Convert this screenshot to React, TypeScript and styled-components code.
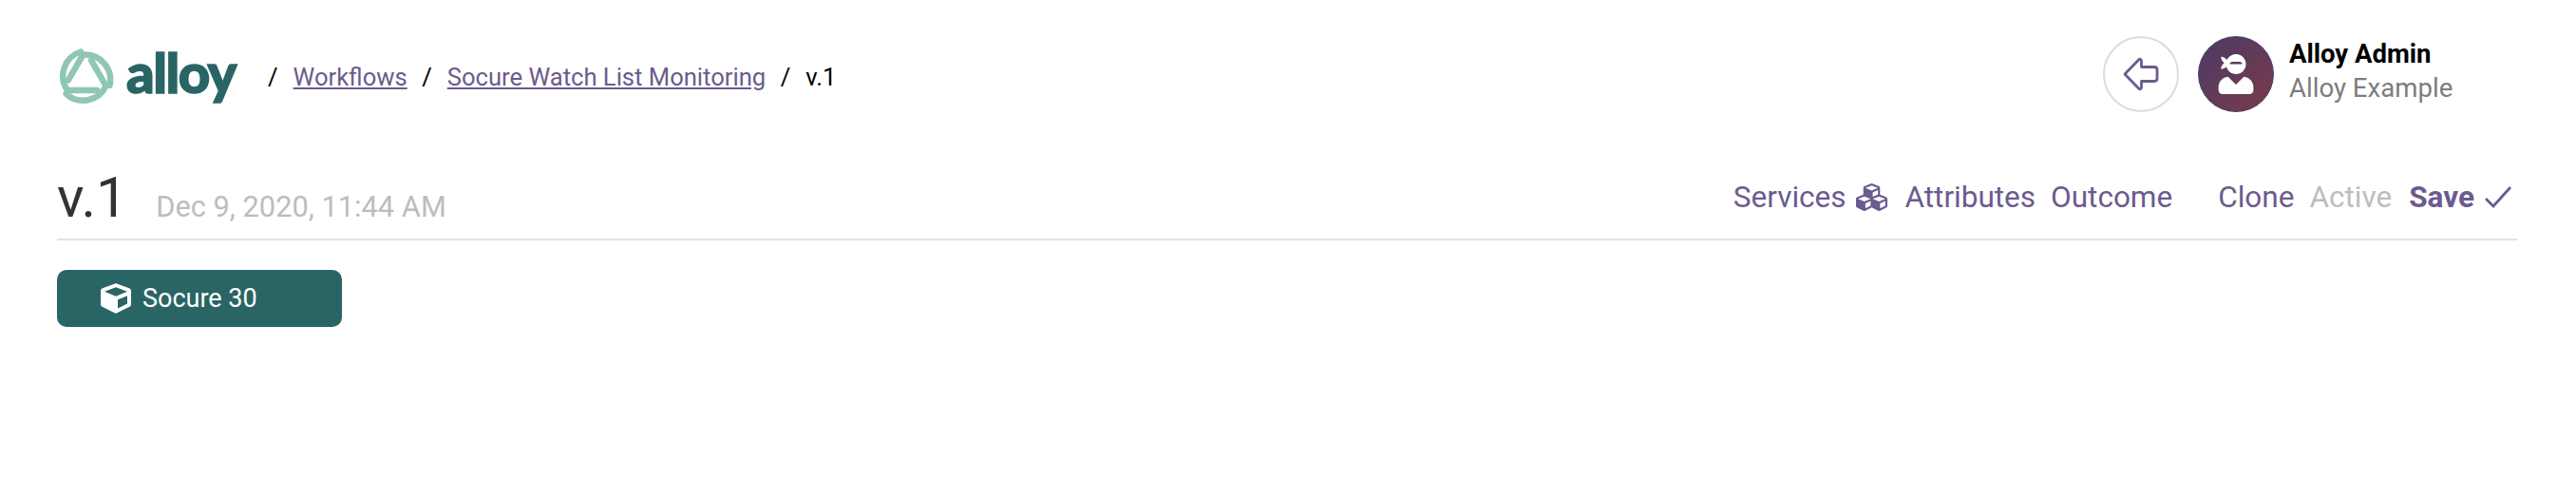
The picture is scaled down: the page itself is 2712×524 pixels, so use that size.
import React from 'react';
import styled, { createGlobalStyle } from 'styled-components';
import { FaCube, FaCubes, FaUserNinja } from 'react-icons/fa';

const GlobalStyle = createGlobalStyle`
  html, body {
    margin: 0;
    padding: 0;
    background: #fff;
    font-family: Roboto, "Liberation Sans", sans-serif;
  }
`;

const purple = '#6b5b8e';

const Page = styled.div`
  box-sizing: border-box;
  width: 2712px;
  height: 524px;
  padding: 38px 62px 0 60px;
`;
const Header = styled.header`
  display: flex;
  align-items: center;
  height: 80px;
`;
const Logo = styled.div`
  display: flex;
  align-items: center;
  gap: 13px;
  width: 222px;
  flex: none;
  svg {
    margin-top: 6px;
  }
`;
const LogoWord = styled.span`
  font-family: Lato, sans-serif;
  font-weight: 900;
  font-size: 58px;
  line-height: 60px;
  margin-top: -4px;
  color: #2a6565;
  letter-spacing: -1.5px;
  -webkit-text-stroke: 1.5px #2a6565;
`;
const Crumbs = styled.nav`
  display: flex;
  align-items: center;
  font-size: 25.6px;
  color: #000;
  padding-top: 5px;
`;
const Slash = styled.span`
  margin-right: 16px;
`;
const CrumbLink = styled.a`
  color: ${purple};
  text-decoration: underline;
  margin-right: 15.5px;
`;
const HeaderRight = styled.div`
  margin-left: auto;
  display: flex;
  align-items: center;
`;
const BackButton = styled.button`
  box-sizing: border-box;
  width: 80px;
  height: 80px;
  padding: 0;
  border: 2px solid #dcdcdc;
  border-radius: 50%;
  background: #fff;
  display: flex;
  align-items: center;
  justify-content: center;
  margin-right: 20px;
`;
const Avatar = styled.div`
  box-sizing: border-box;
  width: 80px;
  height: 80px;
  border-radius: 50%;
  border: 1px solid #4a3a6c;
  background: linear-gradient(135deg, #4b3a66, #7a3b48);
  color: #fff;
  display: flex;
  align-items: center;
  justify-content: center;
  font-size: 42px;
  margin-right: 16px;
`;
const UserBlock = styled.div`
  width: 240px;
  flex: none;
  margin-top: -6px;
`;
const UserName = styled.div`
  font-size: 27.5px;
  font-weight: 700;
  line-height: 36px;
  color: #000;
`;
const UserOrg = styled.div`
  font-size: 27.6px;
  line-height: 36px;
  color: #7d7d7d;
`;
const TitleRow = styled.div`
  display: flex;
  align-items: baseline;
  border-bottom: 2px solid #e2e2e2;
  margin-top: 55px;
  height: 78px;
`;
const Title = styled.h1`
  margin: 0;
  font-size: 59px;
  font-weight: 400;
  line-height: 70px;
  color: #333;
`;
const TitleDate = styled.span`
  margin-left: 30px;
  font-size: 30.8px;
  color: #bdbdbd;
`;
const Actions = styled.div`
  margin-left: auto;
  margin-right: 5px;
  display: flex;
  align-items: center;
  font-size: 31.5px;
  color: ${purple};
  align-self: flex-start;
  height: 58px;
  padding-top: 5px;
`;
interface ActionProps {
  $muted?: boolean;
  $bold?: boolean;
  $gap?: number;
}
const Action = styled.span<ActionProps>`
  margin-left: ${({ $gap = 0 }) => $gap}px;
  color: ${({ $muted }) => ($muted ? '#bdbdbd' : purple)};
  font-weight: ${({ $bold }) => ($bold ? 700 : 400)};
  display: flex;
  align-items: center;
`;
const Pills = styled.div`
  display: flex;
  margin-top: 31px;
`;
const Pill = styled.div`
  box-sizing: border-box;
  width: 300px;
  height: 60px;
  border-radius: 10px;
  background: #2a6565;
  color: #fff;
  display: flex;
  align-items: center;
  padding-left: 46px;
  gap: 12px;
  font-size: 27px;
`;

const LogoMark = () => {
  const piece = 'M25 3.5 A26.5 26.5 0 0 0 11 44 L42 44';
  return (
    <svg width="60" height="60" viewBox="0 0 60 60" fill="none" stroke="#8fc7b3" strokeWidth="6.5" strokeLinecap="round" strokeLinejoin="round">
      <path d={piece} />
      <path d={piece} transform="rotate(120 30 30)" />
      <path d={piece} transform="rotate(240 30 30)" />
    </svg>
  );
};

const BackArrow = () => (
  <svg width="38" height="38" viewBox="0 0 38 38" fill="none" stroke={purple} strokeWidth="2.8" strokeLinejoin="round">
    <path d="M2 19 L17 3.5 Q19 2.5 19.5 5 V11.5 H33 Q36 11.5 36 14.5 V23.5 Q36 26.5 33 26.5 H19.5 V33 Q19 35.5 17 34.5 Z" />
  </svg>
);

const Check = () => (
  <svg width="30" height="24" viewBox="0 0 30 24" fill="none" stroke={purple} strokeWidth="2.8">
    <path d="M2 14 L10 22 L28 2" />
  </svg>
);

const App = () => (
  <Page>
    <GlobalStyle />
    <Header>
      <Logo>
        <LogoMark />
        <LogoWord>alloy</LogoWord>
      </Logo>
      <Crumbs>
        <Slash>/</Slash>
        <CrumbLink href="#">Workflows</CrumbLink>
        <Slash>/</Slash>
        <CrumbLink href="#">Socure Watch List Monitoring</CrumbLink>
        <Slash>/</Slash>
        <span>v.1</span>
      </Crumbs>
      <HeaderRight>
        <BackButton aria-label="Back"><BackArrow /></BackButton>
        <Avatar><FaUserNinja /></Avatar>
        <UserBlock>
          <UserName>Alloy Admin</UserName>
          <UserOrg>Alloy Example</UserOrg>
        </UserBlock>
      </HeaderRight>
    </Header>
    <TitleRow>
      <Title>v.1</Title>
      <TitleDate>Dec 9, 2020, 11:44 AM</TitleDate>
      <Actions>
        <Action>Services</Action>
        <Action $gap={10}><FaCubes size={33} /></Action>
        <Action $gap={19}>Attributes</Action>
        <Action $gap={16}>Outcome</Action>
        <Action $gap={48}>Clone</Action>
        <Action $gap={16} $muted>Active</Action>
        <Action $gap={18} $bold>Save</Action>
        <Action $gap={10}><Check /></Action>
      </Actions>
    </TitleRow>
    <Pills>
      <Pill><FaCube size={32} />Socure 30</Pill>
    </Pills>
  </Page>
);

export default App;
